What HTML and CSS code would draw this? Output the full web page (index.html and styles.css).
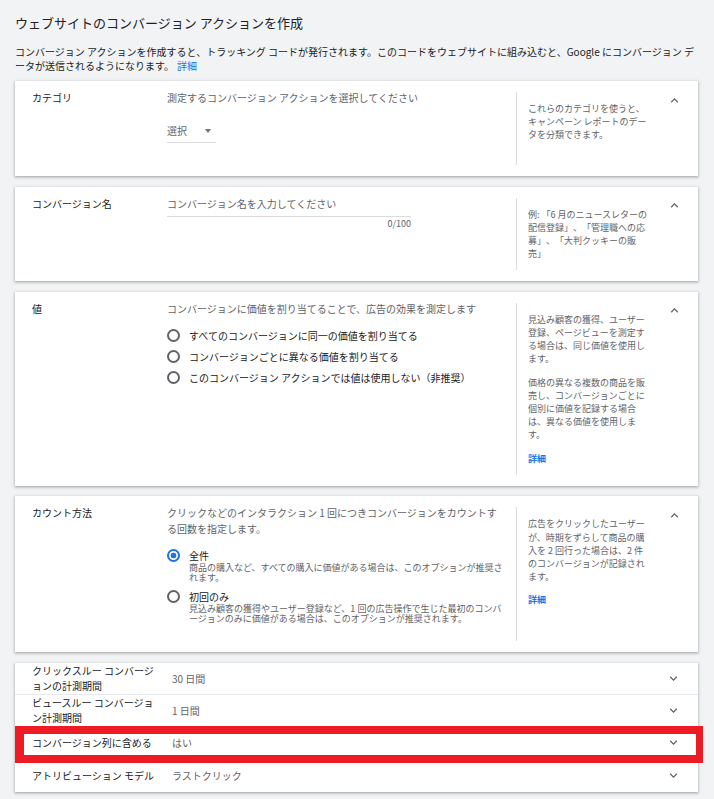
FILE: index.html
```html
<!DOCTYPE html>
<html lang="ja">
<head>
<meta charset="utf-8">
<title>ウェブサイトのコンバージョン アクションを作成</title>
<link rel="stylesheet" href="styles.css">
</head>
<body>
<div class="page">
  <h1 class="title">ウェブサイトのコンバージョン アクションを作成</h1>
  <p class="intro">コンバージョン アクションを作成すると、トラッキング コードが発行されます。このコードをウェブサイトに組み込むと、Google にコンバージョン データが送信されるようになります。<a class="link intro-link" href="#">詳細</a></p>

  <section class="card">
    <div class="label">カテゴリ</div>
    <div class="main">
      <p class="lead">測定するコンバージョン アクションを選択してください</p>
      <div class="select"><span>選択</span><span class="caret"></span></div>
    </div>
    <div class="divider"></div>
    <div class="help"><p>これらのカテゴリを使うと、キャンペーン レポートのデータを分類できます。</p></div>
    <div class="toggle"><svg class="chev" viewBox="0 0 24 24"><path d="M12 8l-6 6 1.41 1.41L12 10.83l4.59 4.58L18 14z"/></svg></div>
  </section>

  <section class="card">
    <div class="label">コンバージョン名</div>
    <div class="main">
      <div class="input">コンバージョン名を入力してください</div>
      <div class="counter">0/100</div>
    </div>
    <div class="divider"></div>
    <div class="help"><p>例: 「6 月のニュースレターの配信登録」、「管理職への応募」、「大判クッキーの販売」</p></div>
    <div class="toggle"><svg class="chev" viewBox="0 0 24 24"><path d="M12 8l-6 6 1.41 1.41L12 10.83l4.59 4.58L18 14z"/></svg></div>
  </section>

  <section class="card">
    <div class="label">値</div>
    <div class="main">
      <p class="lead">コンバージョンに価値を割り当てることで、広告の効果を測定します</p>
      <div class="radios">
        <div class="radio-row"><span class="radio"></span>すべてのコンバージョンに同一の価値を割り当てる</div>
        <div class="radio-row"><span class="radio"></span>コンバージョンごとに異なる価値を割り当てる</div>
        <div class="radio-row"><span class="radio"></span>このコンバージョン アクションでは値は使用しない（非推奨）</div>
      </div>
    </div>
    <div class="divider"></div>
    <div class="help">
      <p>見込み顧客の獲得、ユーザー登録、ページビューを測定する場合は、同じ価値を使用します。</p>
      <p>価格の異なる複数の商品を販売し、コンバージョンごとに個別に価値を記録する場合は、異なる価値を使用します。</p>
      <p><a class="link strong" href="#">詳細</a></p>
    </div>
    <div class="toggle"><svg class="chev" viewBox="0 0 24 24"><path d="M12 8l-6 6 1.41 1.41L12 10.83l4.59 4.58L18 14z"/></svg></div>
  </section>

  <section class="card">
    <div class="label">カウント方法</div>
    <div class="main">
      <p class="lead">クリックなどのインタラクション 1 回につきコンバージョンをカウントする回数を指定します。</p>
      <div class="opt">
        <div class="opt-title"><span class="radio checked"></span>全件</div>
        <div class="opt-desc">商品の購入など、すべての購入に価値がある場合は、このオプションが推奨されます。</div>
      </div>
      <div class="opt second">
        <div class="opt-title"><span class="radio"></span>初回のみ</div>
        <div class="opt-desc">見込み顧客の獲得やユーザー登録など、1 回の広告操作で生じた最初のコンバージョンのみに価値がある場合は、このオプションが推奨されます。</div>
      </div>
    </div>
    <div class="divider"></div>
    <div class="help">
      <p>広告をクリックしたユーザーが、時期をずらして商品の購入を 2 回行った場合は、2 件のコンバージョンが記録されます。</p>
      <p><a class="link strong" href="#">詳細</a></p>
    </div>
    <div class="toggle"><svg class="chev" viewBox="0 0 24 24"><path d="M12 8l-6 6 1.41 1.41L12 10.83l4.59 4.58L18 14z"/></svg></div>
  </section>

  <section class="card-list">
    <div class="row">
      <div class="row-label">クリックスルー コンバージ<br>ョンの計測期間</div>
      <div class="row-value">30 日間</div>
      <div class="row-toggle"><svg class="chev" viewBox="0 0 24 24"><path d="M16.59 8.59L12 13.17 7.41 8.59 6 10l6 6 6-6z"/></svg></div>
    </div>
    <div class="row">
      <div class="row-label">ビュースルー コンバージョ<br>ン計測期間</div>
      <div class="row-value">1 日間</div>
      <div class="row-toggle"><svg class="chev" viewBox="0 0 24 24"><path d="M16.59 8.59L12 13.17 7.41 8.59 6 10l6 6 6-6z"/></svg></div>
    </div>
    <div class="row highlight">
      <div class="row-label">コンバージョン列に含める</div>
      <div class="row-value">はい</div>
      <div class="row-toggle"><svg class="chev" viewBox="0 0 24 24"><path d="M16.59 8.59L12 13.17 7.41 8.59 6 10l6 6 6-6z"/></svg></div>
    </div>
    <div class="row">
      <div class="row-label">アトリビューション モデル</div>
      <div class="row-value">ラストクリック</div>
      <div class="row-toggle"><svg class="chev" viewBox="0 0 24 24"><path d="M16.59 8.59L12 13.17 7.41 8.59 6 10l6 6 6-6z"/></svg></div>
    </div>
  </section>
</div>
</body>
</html>
```

FILE: styles.css
```css
* { box-sizing: border-box; }

body {
  margin: 0;
  background: #f1f3f4;
  font-family: "Noto Sans CJK JP", "Noto Sans", sans-serif;
  color: #202124;
  text-spacing-trim: space-all;
}

.page {
  padding: 15px 16px 20px 15px;
}

.title {
  margin: 0;
  font-size: 13px;
  line-height: 16px;
  font-weight: 400;
  color: #202124;
}

.intro {
  margin: 14px 0 8px;
  font-size: 10px;
  line-height: 14px;
  color: #202124;
}

.link {
  color: #1a73e8;
  text-decoration: none;
}

.intro-link { margin-left: 3px; }

.strong { font-weight: 700; }

.card {
  display: flex;
  background: #fff;
  box-shadow: 0 1px 2px rgba(60, 64, 67, .3), 0 1px 3px 1px rgba(60, 64, 67, .15);
  padding: 9px 0 11px 17px;
  margin-bottom: 10.5px;
}

.label {
  width: 135px;
  flex: none;
  font-size: 10px;
  line-height: 16px;
  color: #202124;
}

.main {
  width: 336px;
  flex: none;
  padding-bottom: 17px;
}

.lead {
  margin: 0;
  font-size: 10px;
  line-height: 16px;
  color: #5f6368;
}

.divider {
  width: 1px;
  flex: none;
  background: #dadce0;
  margin: 2px 0 0 13px;
}

.help {
  width: 122px;
  flex: none;
  margin-left: 11px;
  padding: 12px 0 10px;
  font-size: 9px;
  line-height: 13.2px;
  color: #5f6368;
}

.help p { margin: 0 0 10px; }
.help p:last-child { margin-bottom: 0; }

.toggle {
  flex: 1;
  display: flex;
  justify-content: center;
  align-items: flex-start;
}

.chev {
  width: 15px;
  height: 15px;
  fill: #5f6368;
}

.toggle .chev { margin-top: 2.5px; }

/* select */
.select {
  display: flex;
  align-items: center;
  width: 49px;
  height: 24px;
  margin: 13px 0 5px;
  border-bottom: 1px solid #dadce0;
  font-size: 10px;
  color: #5f6368;
}

.caret {
  margin-left: auto;
  margin-right: 5px;
  width: 0;
  height: 0;
  border-left: 3.5px solid transparent;
  border-right: 3.5px solid transparent;
  border-top: 4px solid #757575;
}

/* input */
.input {
  width: 244px;
  padding-bottom: 4px;
  border-bottom: 1px solid #dadce0;
  font-size: 10px;
  line-height: 16px;
  color: #5f6368;
}

.counter {
  width: 244px;
  margin-top: 1px;
  text-align: right;
  font-size: 9px;
  line-height: 12px;
  color: #5f6368;
}

/* radios */
.radios { margin-top: 8px; }

.radio-row {
  display: flex;
  align-items: center;
  height: 21px;
  font-size: 10px;
  color: #202124;
}

.radio {
  width: 13px;
  height: 13px;
  flex: none;
  border: 2px solid #5f6368;
  border-radius: 50%;
  margin-right: 9px;
}

.radio.checked {
  border-color: #1a73e8;
  background: radial-gradient(circle, #1a73e8 0, #1a73e8 2.6px, transparent 3.2px);
}

.opt { margin-top: 11px; }
.opt.second { margin-top: 6px; }

.opt-title {
  display: flex;
  align-items: center;
  height: 14px;
  font-size: 10px;
  color: #202124;
}

.opt-desc {
  margin-top: 1px;
  padding-left: 22px;
  font-size: 9px;
  line-height: 10px;
  color: #5f6368;
}

/* list card */
.card-list {
  background: #fff;
  box-shadow: 0 1px 2px rgba(60, 64, 67, .3), 0 1px 3px 1px rgba(60, 64, 67, .15);
}

.row {
  position: relative;
  display: flex;
  align-items: center;
  height: 32px;
  padding-left: 17px;
  border-bottom: 1px solid #e8eaed;
}

.row:last-child {
  border-bottom: none;
  height: 33px;
}

.row-label {
  width: 140px;
  flex: none;
  font-size: 10px;
  line-height: 15.5px;
  color: #202124;
}

.row-value {
  flex: 1;
  font-size: 10px;
  color: #5f6368;
}

.row-toggle {
  width: 50px;
  flex: none;
  display: flex;
  justify-content: center;
}

.highlight::after {
  content: "";
  position: absolute;
  left: 0;
  right: -5px;
  top: -1px;
  bottom: -5px;
  border: 8px solid #ed1c24;
  border-left-width: 9px;
  border-right-width: 7px;
  pointer-events: none;
}
```
